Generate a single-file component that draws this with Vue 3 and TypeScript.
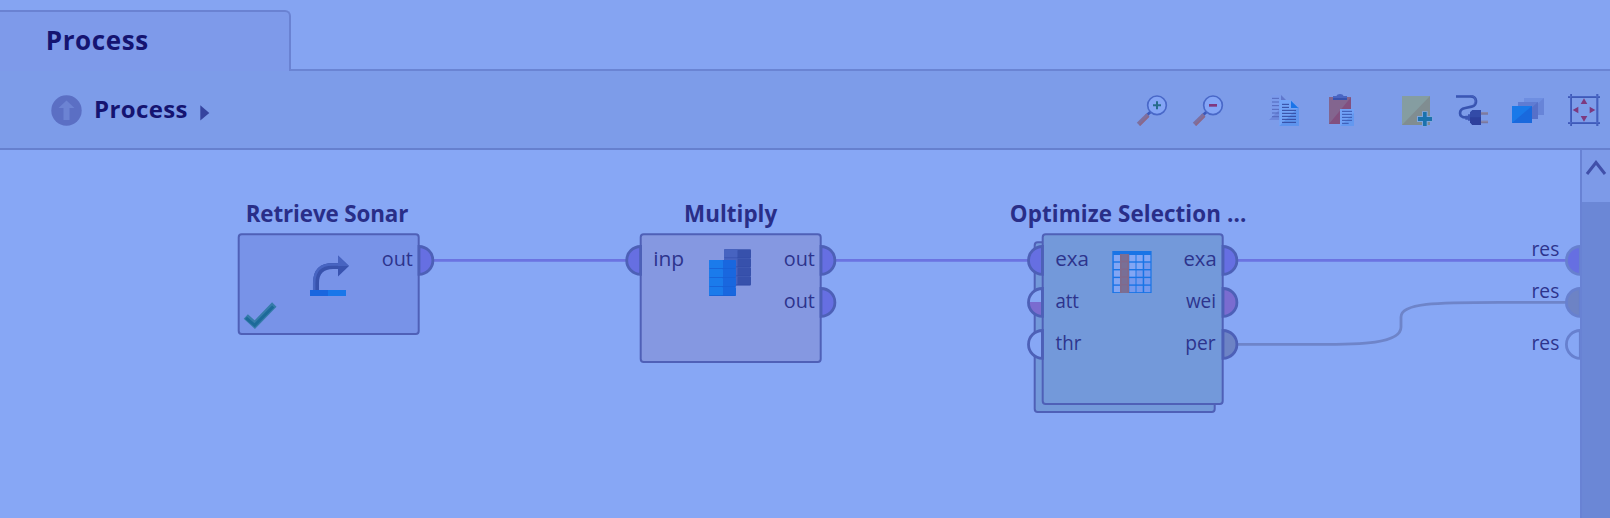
<script setup lang="ts">
type Side = 'in' | 'out'
interface Port { x: number; y: number; side: Side; fill: string; half?: boolean }
interface Label { text: string; x: number; y: number; w: number }
interface Box { x: number; y: number; w: number; h: number; fill: string }

const violet = '#666fe2'
const plum = '#7a6cd0'
const slate = '#6d83c5'
const empty = '#87a7f5'

const boxes: Box[] = [
  { x: 238.7, y: 234.2, w: 180, h: 99.8, fill: '#7893e8' },
  { x: 640.7, y: 234.2, w: 180, h: 127.8, fill: '#8598e1' },
  { x: 1034.7, y: 242.2, w: 180, h: 169.8, fill: '#7399da' },
  { x: 1042.7, y: 234.2, w: 180, h: 169.8, fill: '#7399da' },
]

const ports: Port[] = [
  { x: 419, y: 260.4, side: 'out', fill: violet },
  { x: 640.6, y: 260.4, side: 'in', fill: violet },
  { x: 821, y: 260.4, side: 'out', fill: violet },
  { x: 821, y: 302.4, side: 'out', fill: violet },
  { x: 1042.4, y: 260.4, side: 'in', fill: violet },
  { x: 1042.4, y: 302.4, side: 'in', fill: empty, half: true },
  { x: 1042.4, y: 344.4, side: 'in', fill: empty },
  { x: 1223, y: 260.4, side: 'out', fill: violet },
  { x: 1223, y: 302.4, side: 'out', fill: plum },
  { x: 1223, y: 344.4, side: 'out', fill: slate },
]

const results: Port[] = [
  { x: 1580.3, y: 260.4, side: 'in', fill: violet },
  { x: 1580.3, y: 302.4, side: 'in', fill: slate },
  { x: 1580.3, y: 344.4, side: 'in', fill: empty },
]

const titles: Label[] = [
  { text: 'Retrieve Sonar', x: 245.7, y: 221.8, w: 162.7 },
  { text: 'Multiply', x: 684, y: 221.8, w: 93.2 },
  { text: 'Optimize Selection ...', x: 1009.8, y: 221.8, w: 236.5 },
]

const labels: Label[] = [
  { text: 'out', x: 381.7, y: 265.8, w: 31.2 },
  { text: 'inp', x: 653.2, y: 265.8, w: 31 },
  { text: 'out', x: 783.7, y: 265.8, w: 31.2 },
  { text: 'out', x: 783.7, y: 307.8, w: 31.2 },
  { text: 'exa', x: 1055.2, y: 265.8, w: 33.8 },
  { text: 'att', x: 1055.4, y: 307.8, w: 23.6 },
  { text: 'thr', x: 1055.6, y: 349.8, w: 25.8 },
  { text: 'exa', x: 1183.5, y: 265.8, w: 33.2 },
  { text: 'wei', x: 1185.9, y: 307.8, w: 30.2 },
  { text: 'per', x: 1185.3, y: 349.8, w: 30.4 },
  { text: 'res', x: 1531.5, y: 255.8, w: 27.8 },
  { text: 'res', x: 1531.5, y: 297.8, w: 27.8 },
  { text: 'res', x: 1531.5, y: 349.8, w: 27.8 },
]

function arc(p: Port): string {
  return `M${p.x} ${p.y - 13.9}a13.9 13.9 0 0 ${p.side === 'out' ? 1 : 0} 0 27.8z`
}
</script>

<template>
  <div class="panel">
    <header class="tabs">
      <div class="tab">
        <svg class="tab-text" width="160" height="40"><text x="45.8" y="30" textLength="102.4">Process</text></svg>
      </div>
      <div class="tab-rest"></div>
    </header>

    <div class="toolbar">
      <div class="crumbs">
        <svg width="31" height="31" viewBox="0 0 31 31">
          <circle cx="15.5" cy="15.5" r="15.2" fill="#5b6fc4" />
          <path d="M15.500 5.500 23.500 13h-5v12h-6V13h-5z" fill="#6c83d3" />
        </svg>
        <svg class="crumb-text" width="98" height="36"><text x="1" y="25.7" textLength="93.500">Process</text></svg>
        <svg class="crumb-arrow" width="10" height="16" viewBox="0 0 10 16"><path d="M.3.3 9.3 8 .3 15.500z" fill="#36449f" /></svg>
      </div>

      <div class="tools">
        <!-- zoom in -->
        <svg width="34" height="36" viewBox="48 36 102 108">
          <path d="m79 107 13-12" stroke="#3b58bb" stroke-width="8" />
          <path d="m55 133 29-29" stroke="#7d6f9f" stroke-width="13" />
          <path d="m59 136 27-27" stroke="#8c6889" stroke-width="5" />
          <circle cx="111" cy="76" r="28" fill="#84a5f6" stroke="#4968c8" stroke-width="5" />
          <path d="M99 76h24M111 64v24" stroke="#276c8c" stroke-width="6" />
        </svg>
        <!-- zoom out -->
        <svg class="t-minus" width="34" height="36" viewBox="48 36 102 108">
          <path d="m79 107 13-12" stroke="#3b58bb" stroke-width="8" />
          <path d="m55 133 29-29" stroke="#7d6f9f" stroke-width="13" />
          <path d="m59 136 27-27" stroke="#8c6889" stroke-width="5" />
          <circle cx="111" cy="76" r="28" fill="#84a5f6" stroke="#4968c8" stroke-width="5" />
          <path d="M99 76h24" stroke="#80377f" stroke-width="8" />
        </svg>
        <!-- copy -->
        <svg class="t-copy" width="34" height="36" viewBox="444 36 102 108">
          <path d="M455 45h28l15 15v60h-51l8-8z" fill="#7b9bec" />
          <path d="M447 120 478 89v31z" fill="#6d88dc" />
          <path d="M483 45v15h15z" fill="#6078cd" />
          <path d="M456 55h21M456 66h21M456 77h21M456 88h21M456 99h21M456 110h21" stroke="#5369bd" stroke-width="3" />
          <path d="M478 60h35l24 24v54h-59z" fill="#72a4f8" />
          <path d="M478 138 537 80v58z" fill="#5e94ee" />
          <path d="M513 62v22h22z" fill="#1974e8" />
          <path d="M486 73h21M486 82h21M486 91h42M486 100h42M486 109h42M486 118h42M486 127h42" stroke="#31469d" stroke-width="3" />
        </svg>
        <!-- paste -->
        <svg class="t-paste" width="34" height="36" viewBox="621 36 102 108">
          <path d="M627 51h66v81h-66z" fill="#83658f" />
          <path d="M693 52v80h-66z" fill="#82507f" />
          <path d="M639 48h10q2-6 11-6t11 6h10v11h-42z" fill="#4865c3" />
          <path d="M639 54h42v6h-42z" fill="#3752af" />
          <path d="M660 87h42v51h-42z" fill="#71a2f7" />
          <path d="M702 98v40h-40z" fill="#6398f0" />
          <path d="M666 94h30M666 103h30M666 112h30M666 121h30M666 130h20" stroke="#3956af" stroke-width="3" />
        </svg>
        <!-- add note -->
        <svg class="t-note" width="34" height="36" viewBox="60 36 102 108">
          <path d="M66 48h84v87H66z" fill="#859da1" />
          <path d="M150 48v87H66z" fill="#808d91" />
          <path d="M126 94h17v14h15v18h-15v14h-17v-14h-15v-18h15z" fill="#7fa5de" />
          <path d="M129 96h11v15h16v12h-16v15h-11v-15h-15v-12h15z" fill="#1b72ad" />
        </svg>
        <!-- plug -->
        <svg class="t-plug" width="34" height="36" viewBox="225 36 102 108">
          <path d="M228 49h43c21 0 23 27 4 31l-19 4c-21 4-22 28 2 28h12" fill="none" stroke="#3854b0" stroke-width="8" />
          <path d="M228 47h43c16 0 20 18 8 27" fill="none" stroke="#4b67c5" stroke-width="3" />
          <path d="M256 107h8v12h-8zM264 103h6v19h-6z" fill="#3c56b4" />
          <path d="M270 97l7-7h26v45h-26l-7-8z" fill="#334ba8" />
          <path d="M270 112h33v23h-26l-7-8z" fill="#2d409d" />
          <path d="M303 100h21M303 126h21" stroke="#7b789f" stroke-width="8" />
          <path d="M303 98h21M303 124h21" stroke="#8e91b6" stroke-width="2" />
        </svg>
        <!-- operator order -->
        <svg class="t-stack" width="34" height="36" viewBox="393 36 102 108">
          <path d="M432 54h60v51h-60z" fill="#6e8ee1" /><path d="M492 54v51h-56z" fill="#6784d8" />
          <path d="M414 66h60v51h-60z" fill="#5f7cd3" /><path d="M474 66v51h-56z" fill="#5670c9" />
          <path d="M396 78h60v51h-60z" fill="#1979e9" /><path d="M456 78v51h-60z" fill="#1969dd" />
        </svg>
        <!-- fit -->
        <svg class="t-fit" width="34" height="36" viewBox="561 36 102 108">
          <path d="M564 51h96M564 129h96M573 42v96M652 42v96" stroke="#3e59b7" stroke-width="6" />
          <path d="M564 50h96M564 128h96M572 42v96M651 42v96" stroke="#536fce" stroke-width="2" />
          <path d="M602 72h20l-10-17zM602 108h20l-10 17zM595 80v20l-17-10zM629 80v20l17-10z" fill="#7d397f" />
        </svg>
      </div>
    </div>

    <main class="workspace">
      <svg class="canvas" width="1580" height="368" viewBox="0 150 1580 368">
        <g fill="none" stroke-width="2.8">
          <path d="M433 260.400h193M835 260.400h193M1237 260.400h329" stroke="#6b73e1" />
          <path d="M1237 344.400h80C1360 344.400 1401 344 1401 327V317C1401 303 1436 302.400 1500 302.400H1566" stroke="#6e84c9" />
        </g>

        <rect v-for="(b, i) in boxes" :key="'b' + i" :x="b.x" :y="b.y" :width="b.w" :height="b.h" rx="3" :fill="b.fill" stroke="#4f60b7" stroke-width="2" />

        <g stroke="#4d60b7" stroke-width="2.800">
          <g v-for="(p, i) in ports" :key="'p' + i">
            <path :d="arc(p)" :fill="p.fill" stroke="none" />
            <path v-if="p.half" :d="`M${p.x} ${p.y - 0.5}h-14a14 14 0 0 0 14 14z`" :fill="plum" stroke="none" />
            <path :d="arc(p)" fill="none" />
          </g>
        </g>
        <path v-for="(p, i) in results" :key="'r' + i" :d="arc(p)" :fill="p.fill" stroke="#6780cf" stroke-width="2.800" />

        <!-- retrieve icon -->
        <path d="M316 290v-10q0-17 17-17h7" fill="none" stroke="#3852ac" stroke-width="6" transform="translate(0 3)" />
        <path d="M314.200 290v-7q0-18.500 18-18.500h8" fill="none" stroke="#4865c2" stroke-width="2.500" />
        <path d="M338 255.500 349 266l-11 10.500z" fill="#3953af" />
        <path d="M338 255.500 349 266h-11z" fill="#4864c1" />
        <path d="M310 290h36v6h-36z" fill="#1977ea" />
        <path d="M310 290h18v6h-18z" fill="#1966df" />

        <!-- status check -->
        <path d="m245.800 316.500 9 8.200 19.500-20.200" fill="none" stroke="#367caa" stroke-width="6.200" />
        <path d="m246 317.800 8.700 7.500 18.500-18.800" fill="none" stroke="#1c6a99" stroke-width="3" />

        <!-- multiply icon -->
        <g v-for="n in 4" :key="'m' + n">
          <rect x="724" :y="240.300 + n * 9" width="27" height="9" rx="1" fill="#3751ac" />
          <rect x="724" :y="240.300 + n * 9" width="13.500" height="9" rx="1" fill="#4763c0" />
          <path :d="`M724.500 ${249 + n * 9}h26`" stroke="#304aa7" stroke-width=".8" />
        </g>
        <g v-for="n in 4" :key="'n' + n">
          <rect x="709" :y="250.900 + n * 9" width="27" height="9" rx="1" fill="#1967df" />
          <rect x="709" :y="250.900 + n * 9" width="14" height="9" rx="1" fill="#1b7beb" />
          <path :d="`M709.500 ${259.500 + n * 9}h26`" stroke="#175fd5" stroke-width=".8" />
        </g>

        <!-- selection table icon -->
        <path d="M1112.300 251h39.300v42h-39.300z" fill="#1974e6" />
        <g v-for="r in 5" :key="'row' + r">
          <rect v-for="(x, c) in [1113.800, 1121.500, 1129.300, 1136.500, 1144.200]" :key="c" :x="x" :y="247.300 + r * 7.700" width="6.200" height="6.300" :fill="r + c > 5 ? '#7599ee' : '#82a6f4'" />
        </g>
        <path d="M1120 254h9v39h-9z" fill="#796f96" />
        <path d="M1120.800 254v39M1128.200 254v39" stroke="#836a89" stroke-width="1.500" />
        <path d="M1121 261.500h7M1121 269.200h7M1121 277h7M1121 284.600h7" stroke="#81698c" stroke-width="1.300" />

        <text v-for="t in titles" :key="t.text" class="title" :x="t.x" :y="t.y" :textLength="t.w">{{ t.text }}</text>
        <text v-for="(t, i) in labels" :key="'l' + i" class="port-label" :x="t.x" :y="t.y" :textLength="t.w" lengthAdjust="spacingAndGlyphs">{{ t.text }}</text>
      </svg>

      <aside class="scrollbar">
        <div class="scroll-up">
          <svg width="24" height="18" viewBox="0 0 24 18"><path d="M3 15 12 3.500l9 11.500" fill="none" stroke="#4150a9" stroke-width="3" /></svg>
        </div>
        <div class="thumb"></div>
      </aside>
    </main>
  </div>
</template>

<style>
body { margin: 0; overflow: hidden; }
</style>

<style scoped>
.panel {
  width: 1610px;
  height: 518px;
  display: flex;
  flex-direction: column;
  overflow: hidden;
  background: #85a4f2;
  font-family: "Open Sans", "Noto Sans", sans-serif;
}
svg { display: block; flex: none; }
.tabs { height: 71px; display: flex; align-items: flex-end; flex: none; }
.tab {
  box-sizing: border-box;
  width: 291px;
  height: 61px;
  padding-top: 8px;
  border-top: 2px solid #6a82d2;
  border-right: 2px solid #6a82d2;
  border-top-right-radius: 6px;
  background: #7e9aea;
}
.tab-text text { font-size: 26px; font-weight: 700; fill: #151471; }
.tab-rest { flex: 1; height: 2px; background: #6a84d3; }
.toolbar {
  box-sizing: border-box;
  height: 79px;
  flex: none;
  display: flex;
  justify-content: space-between;
  background: #7d9ce9;
  border-bottom: 2px solid #6680ce;
}
.crumbs { display: flex; align-items: flex-start; padding: 24px 0 0 50.5px; }
.crumb-text { margin: -3px 0 0 11px; }
.crumb-text text { font-size: 24px; font-weight: 700; fill: #151471; }
.crumb-arrow { margin: 10px 0 0 9.5px; }
.tools { display: flex; align-items: flex-start; padding: 21px 9px 0 0; }
.t-minus { margin-left: 22px; }
.t-copy { margin-left: 42px; }
.t-paste { margin-left: 25px; }
.t-note { margin-left: 39px; }
.t-plug { margin-left: 21px; }
.t-stack { margin-left: 22px; }
.t-fit { margin-left: 22px; }
.workspace { display: flex; height: 368px; background: #87a7f5; }
.title { font-size: 22.4px; font-weight: 700; fill: #292e88; }
.port-label { font-size: 19.8px; fill: #2d348d; }
.scrollbar {
  box-sizing: border-box;
  width: 30px;
  display: flex;
  flex-direction: column;
  border-left: 2px solid #6882d4;
}
.scroll-up {
  box-sizing: border-box;
  height: 52px;
  padding: 9px 0 0 2px;
  background: #7d9ae8;
}
.thumb { flex: 1; background: #6b87d6; }
</style>
